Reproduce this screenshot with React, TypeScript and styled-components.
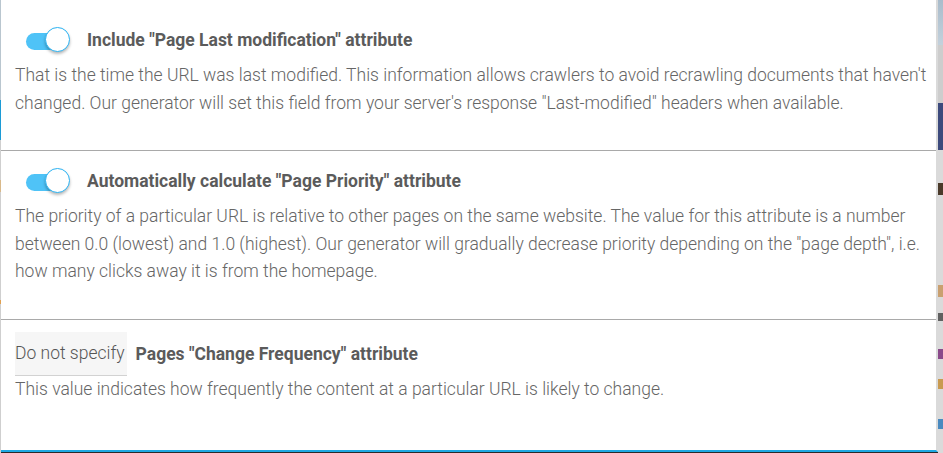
import React from "react";
import styled, { createGlobalStyle } from "styled-components";

const Global = createGlobalStyle`
  html, body { margin: 0; padding: 0; }
  body {
    background: #2b2b2b;
    overflow: hidden;
    font-family: Roboto, "Noto Sans", Arial, sans-serif;
  }
`;

const Screen = styled.div`
  display: flex;
  align-items: flex-start;
  width: 943px;
  height: 453px;
  overflow: hidden;
`;

const EdgeStrip = styled.div<{ $w: number }>`
  display: flex;
  flex-direction: column;
  width: ${(p) => p.$w}px;
  height: 453px;
  flex: none;
`;

const EdgeSegment = styled.div<{ $h: number; $bg: string }>`
  height: ${(p) => p.$h}px;
  background: ${(p) => p.$bg};
  flex: none;
`;

const Panel = styled.div`
  flex: 1;
  height: 452px;
  box-sizing: border-box;
  background: #ffffff;
  border-right: 2px solid #dadada;
  border-bottom: 2px solid #1ea8e2;
  display: flex;
  flex-direction: column;
`;

const Section = styled.section<{ $first?: boolean }>`
  padding: ${(p) => (p.$first ? "18px" : "8px")} 6px 33px 14px;
  border-top: ${(p) => (p.$first ? "none" : "1px solid #a9a9a9")};
`;

const HeadingRow = styled.div<{ $gap: number; $offset?: number }>`
  display: flex;
  align-items: center;
  min-height: 44px;
  gap: ${(p) => p.$gap}px;
  margin-top: ${(p) => p.$offset ?? 0}px;
`;

const ToggleWrap = styled.div`
  position: relative;
  width: 44px;
  height: 26px;
  margin-left: 11px;
  display: flex;
  align-items: center;
  flex: none;
`;

const Track = styled.div`
  width: 38px;
  height: 17px;
  border-radius: 9px;
  background: #4fc3f7;
  margin-top: 2px;
`;

const Knob = styled.div`
  position: absolute;
  right: 0;
  top: 0;
  width: 25px;
  height: 25px;
  box-sizing: border-box;
  border-radius: 50%;
  background: #ffffff;
  border: 1.5px solid #2bb3f3;
  box-shadow: 0 2px 3px rgba(0, 0, 0, 0.28);
`;

const Title = styled.h3`
  margin: 0;
  font-family: Roboto, "Noto Sans", Arial, sans-serif;
  font-weight: 700;
  font-size: 17.5px;
  color: #5b5b5b;
  white-space: nowrap;
`;

const Description = styled.p`
  margin: 0;
  max-width: 915px;
  font-family: Roboto, "Noto Sans", Arial, sans-serif;
  font-weight: 300;
  font-size: 17.5px;
  line-height: 27.5px;
  color: #666666;
`;

const SelectBox = styled.div`
  display: flex;
  align-items: center;
  height: 44px;
  box-sizing: border-box;
  padding: 0 2px 0 0;
  background: #f6f6f6;
  border-bottom: 1px solid #d2d2d2;
  font-family: Roboto, "Noto Sans", Arial, sans-serif;
  font-weight: 300;
  font-size: 17.5px;
  color: #555555;
  white-space: nowrap;
  flex: none;
`;

const Toggle = () => (
  <ToggleWrap>
    <Track />
    <Knob />
  </ToggleWrap>
);

export default function App() {
  return (
    <>
      <Global />
      <Screen>
        <EdgeStrip $w={1}>
          <EdgeSegment $h={100} $bg="#b9c6cf" />
          <EdgeSegment $h={40} $bg="#1c9bd6" />
          <EdgeSegment $h={40} $bg="#cfcfcf" />
          <EdgeSegment $h={12} $bg="#d9b98a" />
          <EdgeSegment $h={108} $bg="#cfcfcf" />
          <EdgeSegment $h={4} $bg="#e0a050" />
          <EdgeSegment $h={149} $bg="#cfcfcf" />
        </EdgeStrip>
        <Panel>
          <Section $first>
            <HeadingRow $gap={17}>
              <Toggle />
              <Title>Include "Page Last modification" attribute</Title>
            </HeadingRow>
            <Description>
              That is the time the URL was last modified. This information allows crawlers to avoid
              recrawling documents that haven't changed. Our generator will set this field from your
              server's response "Last-modified" headers when available.
            </Description>
          </Section>
          <Section>
            <HeadingRow $gap={17}>
              <Toggle />
              <Title>Automatically calculate "Page Priority" attribute</Title>
            </HeadingRow>
            <Description>
              The priority of a particular URL is relative to other pages on the same website. The
              value for this attribute is a number between 0.0 (lowest) and 1.0 (highest). Our
              generator will gradually decrease priority depending on the "page depth", i.e. how many
              clicks away it is from the homepage.
            </Description>
          </Section>
          <Section>
            <HeadingRow $gap={9} $offset={4}>
              <SelectBox>Do not specify</SelectBox>
              <Title>Pages "Change Frequency" attribute</Title>
            </HeadingRow>
            <Description>
              This value indicates how frequently the content at a particular URL is likely to change.
            </Description>
          </Section>
        </Panel>
        <EdgeStrip $w={5}>
          <EdgeSegment $h={45} $bg="linear-gradient(#a9bccb, #c3d1dc)" />
          <EdgeSegment $h={58} $bg="#cdcdcd" />
          <EdgeSegment $h={47} $bg="#3c4a7c" />
          <EdgeSegment $h={33} $bg="#dadada" />
          <EdgeSegment $h={12} $bg="#4a3a2a" />
          <EdgeSegment $h={90} $bg="#dadada" />
          <EdgeSegment $h={12} $bg="#c9a070" />
          <EdgeSegment $h={16} $bg="#dadada" />
          <EdgeSegment $h={8} $bg="#606060" />
          <EdgeSegment $h={28} $bg="#dadada" />
          <EdgeSegment $h={10} $bg="#8a4a8a" />
          <EdgeSegment $h={20} $bg="#dadada" />
          <EdgeSegment $h={10} $bg="#c99a50" />
          <EdgeSegment $h={30} $bg="#dadada" />
          <EdgeSegment $h={10} $bg="#4a8ac0" />
          <EdgeSegment $h={34} $bg="#dadada" />
        </EdgeStrip>
      </Screen>
    </>
  );
}
